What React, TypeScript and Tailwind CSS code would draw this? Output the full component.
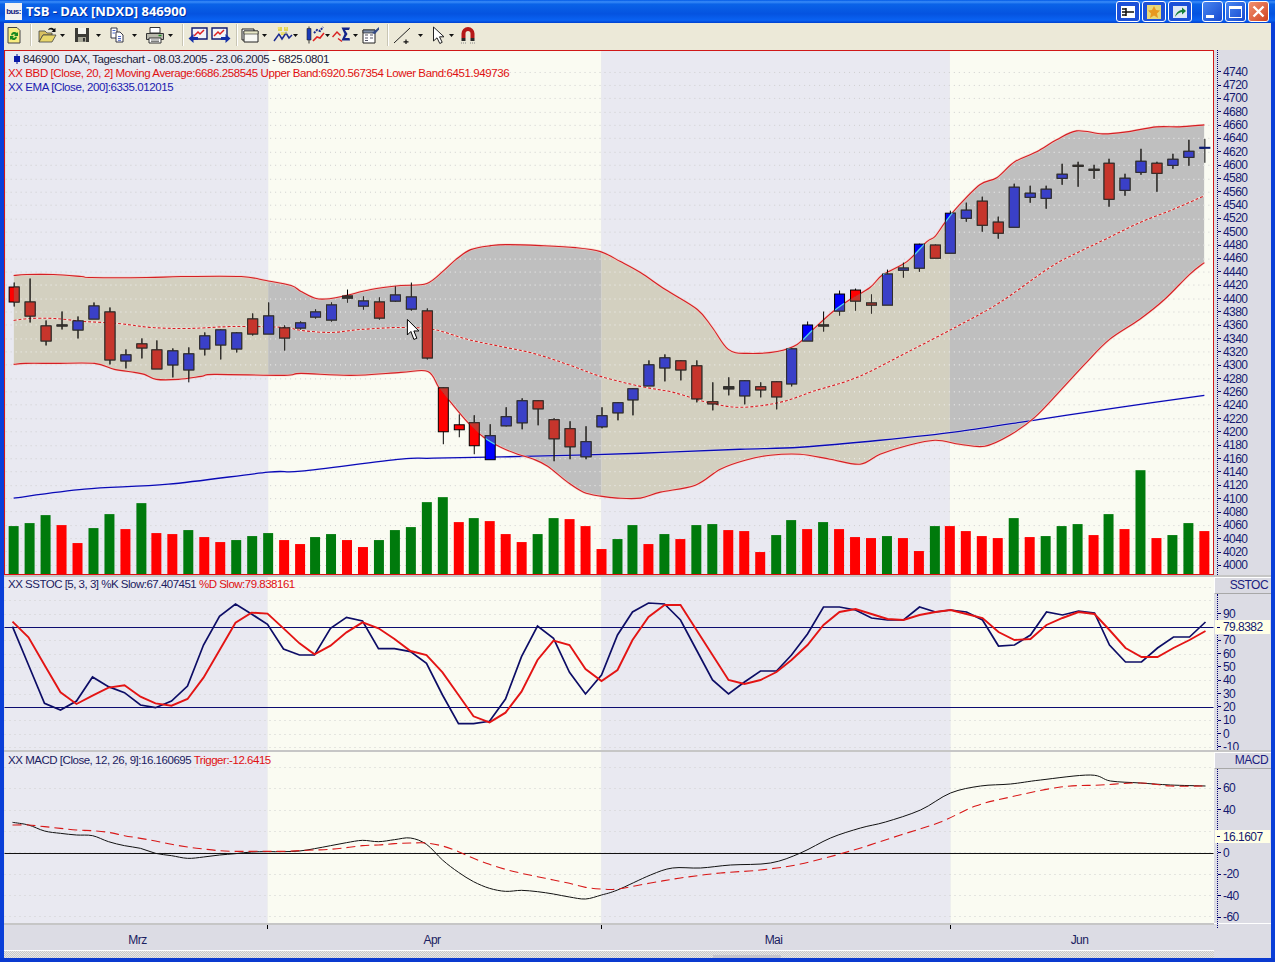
import React from "react";

const xAt = (i: number) => Math.round(12.3 + 15.9 * i);
type C = [number, number, number, number, "r" | "b" | "k"];
const candles: C[] = [
  [283,287,302,307,"r"],[279,302,316,323,"r"],[321,326,341,346,"r"],[312,325,326,330,"k"],[317,321,330,339,"b"],
  [303,306,319,319,"b"],[308,312,360,365,"r"],[350,355,361,369,"b"],[339,344,348,359,"r"],[341,350,369,369,"r"],
  [349,351,365,378,"b"],[348,354,370,383,"b"],[333,336,349,356,"b"],[330,330,345,360,"b"],[333,333,349,353,"b"],
  [314,319,334,336,"r"],[303,316,334,334,"b"],[326,328,338,351,"r"],[322,323,328,330,"b"],[310,312,317,319,"b"],
  [303,305,320,322,"b"],[290,296,298,303,"k"],[297,301,306,310,"b"],[298,302,318,320,"r"],[287,295,301,302,"b"],
  [283,297,309,311,"b"],[309,311,358,360,"r"],[388,388,432,445,"r"],[415,425,430,438,"r"],[416,423,446,455,"r"],
  [425,436,460,460,"b"],[408,417,426,427,"b"],[399,401,423,430,"b"],[401,401,409,426,"r"],[419,420,439,462,"r"],
  [422,429,447,460,"r"],[427,442,457,460,"b"],[408,416,427,429,"b"],[403,403,413,421,"b"],[389,389,400,416,"b"],
  [361,365,386,386,"b"],[355,358,368,382,"b"],[361,361,370,381,"r"],[361,366,399,403,"r"],[383,402,404,411,"r"],
  [378,387,389,396,"k"],[381,381,396,405,"b"],[383,387,390,398,"r"],[382,382,397,410,"r"],[349,349,384,387,"b"],
  [322,325,341,341,"b"],[312,325,326,332,"k"],[291,294,311,316,"b"],[289,290,301,311,"r"],[295,303,305,314,"r"],
  [270,274,305,305,"b"],[263,268,270,278,"b"],[244,244,268,272,"b"],[245,245,258,258,"r"],[211,213,253,253,"b"],
  [203,210,218,222,"b"],[197,201,225,232,"r"],[217,222,233,239,"r"],[184,187,227,227,"b"],[186,193,197,203,"b"],
  [186,189,198,209,"b"],[164,174,178,185,"b"],[162,165,166,187,"k"],[165,169,170,179,"k"],[159,163,199,207,"r"],
  [174,178,190,196,"b"],[149,161,172,175,"b"],[162,163,173,192,"r"],[154,159,165,169,"b"],[140,151,157,166,"b"],
  [139,147,148,163,"k"],
];
const volZ: [number, "g" | "r"][] = [
  [186,"g"],[177,"g"],[153,"g"],[183,"r"],[237,"r"],[192,"g"],[150,"g"],[195,"r"],[117,"g"],[207,"r"],[210,"r"],[198,"g"],[219,"r"],[234,"r"],[228,"g"],[216,"g"],[207,"g"],[228,"r"],[240,"r"],[219,"g"],
  [210,"g"],[228,"r"],[249,"r"],[228,"g"],[198,"g"],[189,"g"],[114,"g"],[99,"g"],[174,"r"],[162,"g"],[171,"r"],[210,"r"],[234,"r"],[210,"g"],[162,"g"],[165,"r"],[186,"r"],[255,"r"],[225,"g"],[183,"g"],
  [240,"r"],[210,"g"],[225,"r"],[183,"g"],[180,"g"],[198,"r"],[201,"r"],[264,"r"],[213,"g"],[168,"g"],[195,"r"],[174,"g"],[195,"r"],[219,"r"],[222,"r"],[216,"g"],[222,"r"],[261,"r"],[186,"g"],[186,"r"],
  [201,"r"],[216,"r"],[222,"r"],[162,"g"],[219,"r"],[216,"g"],[186,"g"],[180,"g"],[213,"r"],[150,"g"],[195,"r"],[18,"g"],[222,"r"],[213,"g"],[177,"g"],[201,"r"],
];
type P = [number, number][];
const upper: P = [[12,276],[25,275],[52,275],[80,277],[90,278],[145,278],[180,277],[240,277],[265,281],[290,286],[300,292],[315,299],[330,299],[345,296],[370,290],[400,286],[426,284],[444,270],[455,260],[470,250],[490,246],[505,245],[540,246],[575,248],[600,252],[620,262],[640,273],[665,290],[697,310],[712,328],[728,350],[747,354],[777,352],[797,345],[813,330],[833,312],[850,300],[870,288],[883,275],[907,262],[927,242],[935,237],[945,223],[957,208],[980,185],[997,178],[1015,162],[1037,152],[1057,140],[1077,131],[1103,134],[1127,132],[1157,127],[1180,127],[1205,125]];
const lower: P = [[12,365],[24,364],[53,364],[93,364],[113,370],[133,373],[143,375],[155,380],[177,380],[200,377],[213,375],[283,376],[300,374],[350,376],[400,373],[427,372],[438,388],[450,403],[467,423],[483,438],[500,448],[517,455],[533,460],[547,467],[567,483],[583,493],[600,497],[617,499],[640,499],[660,493],[695,486],[720,470],[745,461],[770,456],[800,455],[830,460],[860,465],[880,455],[905,447],[935,441],[960,445],[985,447],[1010,436],[1035,418],[1060,392],[1085,365],[1110,340],[1140,320],[1165,300],[1190,275],[1205,263]];
const mid: P = [[12,321],[28,319],[53,319],[83,322],[117,324],[150,328],[187,329],[233,327],[283,328],[300,331],[330,333],[360,330],[400,328],[433,330],[467,340],[500,347],[533,354],[567,365],[600,377],[640,387],[673,393],[707,403],[740,408],[780,403],[813,392],[857,378],[907,353],[957,327],[1000,303],[1050,268],[1080,252],[1107,239],[1140,223],[1173,210],[1205,196]];
const ema: P = [[12,499],[83,490],[167,485],[267,473],[300,472],[400,460],[433,459],[533,457],[640,454],[740,450],[800,448],[880,441],[960,432],[1040,420],[1120,408],[1205,396]];

const zk = [155,270,385,405,378,306,335,353,390,398,378,333,210,124,87,117,148,222,240,240,160,127,138,221,221,230,265,360,446,446,439,372,245,153,190,292,357,300,180];
const zd = [140,187,270,352,387,362,338,331,365,385,392,372,308,226,143,113,116,160,205,238,212,172,142,160,192,228,240,292,360,424,442,413,350,255,197,210,282,318,285];
const kRight = [612,603,604,620,650,680,694,682,671,671,655,634,607,607,610,618,620,620,607,612,610,612,620,646,645,635,612,615,611,613,645,662,662,648,637,637,622];
const dRight = [640,617,605,605,630,655,680,684,680,672,660,645,625,612,609,614,619,620,615,612,610,614,618,632,640,639,625,618,612,614,630,648,657,657,648,640,631];
const stK: P = [...zk.map((z, i) => [xAt(i), 575 + z / 3] as [number, number]), ...kRight.map((y, i) => [xAt(i + 39), y] as [number, number])];
const stD: P = [...zd.map((z, i) => [xAt(i), 575 + z / 3] as [number, number]), ...dRight.map((y, i) => [xAt(i + 39), y] as [number, number])];

const mB = [742,750,768,775,780,782,800,812,820,835,842,850,846,840,836,831,830,830,828,821,812,803,796,800,794,789,808,855,892,920,940,949,946,950,957,966,972,960,945];
const mT = [750,750,755,760,765,767,772,782,790,798,808,816,822,827,829,829,829,829,827,825,823,818,812,810,806,804,804,813,830,850,868,883,895,905,915,925,937,942,942];
const macdB: P = [...mB.map((z, i) => [xAt(i), 575 + z / 3] as [number, number]), [650,875],[672,868],[700,868],[730,865],[770,863],[800,853],[830,838],[860,828],[885,822],[920,810],[950,793],[980,786],[1010,784],[1040,780],[1090,775],[1110,781],[1140,783],[1170,785],[1205,786]];
const macdT: P = [...mT.map((z, i) => [xAt(i), 575 + z / 3] as [number, number]), [650,883],[680,878],[720,873],[760,870],[800,864],[850,851],[900,835],[940,822],[975,806],[1010,797],[1060,787],[1100,785],[1140,783],[1170,786],[1205,786]];

const pts = (p: P) => p.map(([x, y]) => `${x},${y}`).join(" ");
const curve = (p: P) => {
  let d = "";
  for (let i = 0; i < p.length - 1; i++) {
    const p0 = p[Math.max(i - 1, 0)], p1 = p[i], p2 = p[i + 1], p3 = p[Math.min(i + 2, p.length - 1)];
    const c1x = p1[0] + (p2[0] - p0[0]) / 6, c1y = p1[1] + (p2[1] - p0[1]) / 6;
    const c2x = p2[0] - (p3[0] - p1[0]) / 6, c2y = p2[1] - (p3[1] - p1[1]) / 6;
    d += ` C${c1x.toFixed(1)} ${c1y.toFixed(1)} ${c2x.toFixed(1)} ${c2y.toFixed(1)} ${p2[0]} ${p2[1]}`;
  }
  return d;
};
const smooth = (p: P) => `M${p[0][0]} ${p[0][1]}` + curve(p);
const lowerRev = [...lower].reverse() as P;
const bandPath = smooth(upper) + ` L${lowerRev[0][0]} ${lowerRev[0][1]}` + curve(lowerRev) + " Z";

const sections: [number, number, string, string][] = [
  [4, 263, "#e9e9f1", "#d3d0c0"],
  [267, 334, "#fafbf2", "#bfbfbf"],
  [601, 349, "#e9e9f1", "#d3d0c0"],
  [950, 264, "#fafbf2", "#bfbfbf"],
];
const Sections = ({ y, h }: { y: number; h: number }) => (
  <>
    {sections.map(([x, w, c]) => (
      <rect key={x} x={x} y={y} width={w} height={h} fill={c} />
    ))}
  </>
);
const DotRows = ({ from, to, step, color = "#cfcfcf" }: { from: number; to: number; step: number; color?: string }) => {
  const out: React.ReactElement[] = [];
  for (let y = from; y <= to; y += step) {
    const yy = Math.round(y) + 0.5;
    out.push(<line key={y} x1={4} x2={1213} y1={yy} y2={yy} stroke={color} strokeWidth={1} strokeDasharray="1 4" />);
  }
  return <>{out}</>;
};

const Candles = ({ inside }: { inside: boolean }) => (
  <>
    {candles.map(([hi, t, b, lo, c], i) => {
      const x = xAt(i);
      const fill = c === "r" ? (inside ? "#c6352c" : "#ff0000") : c === "b" ? (inside ? "#3a40c8" : "#0000ff") : "#333";
      const stroke = inside ? "#33302c" : "#000";
      return (
        <g key={i}>
          <line x1={x + 0.5} x2={x + 0.5} y1={hi} y2={lo} stroke={stroke} />
          {i === 75 ? (
            <rect x={x - 5} y={t} width={11} height={2} fill="#0a1a70" />
          ) : (
            <rect x={x - 4.5} y={t + 0.5} width={10} height={Math.max(b - t, 1)} fill={fill} stroke={stroke} />
          )}
        </g>
      );
    })}
  </>
);

const PriceChart = () => (
  <svg viewBox="4 51 1209 524" className="block w-full h-full">
    <defs>
      <clipPath id="band"><path d={bandPath} /></clipPath>
      <clipPath id="blueBodies">
        {candles.map(([, t, b, , c], i) => (c === "b" ? <rect key={i} x={xAt(i) - 4} y={t} width={9} height={b - t} /> : null))}
      </clipPath>
    </defs>
    <Sections y={51} h={524} />
    <DotRows from={71.7} to={567} step={13.352} />
    <g clipPath="url(#band)">
      {sections.map(([x, w, , c]) => (
        <rect key={x} x={x} y={51} width={w} height={524} fill={c} />
      ))}
      <DotRows from={71.7} to={567} step={13.352} color="#f2f2f2" />
    </g>
    <path d={smooth(ema)} fill="none" stroke="#e8e8ff" strokeWidth={2.2} opacity={0.6} />
    <path d={smooth(ema)} fill="none" stroke="#0a0ab4" strokeWidth={1.3} />
    <path d={smooth(upper)} fill="none" stroke="#f6c9c0" strokeWidth={2.4} opacity={0.7} />
    <path d={smooth(lower)} fill="none" stroke="#f6c9c0" strokeWidth={2.4} opacity={0.7} />
    <path d={smooth(upper)} fill="none" stroke="#d51f24" strokeWidth={1.1} />
    <path d={smooth(lower)} fill="none" stroke="#d51f24" strokeWidth={1.1} />
    <path d={smooth(mid)} fill="none" stroke="#f5e6df" strokeWidth={1.4} />
    <path d={smooth(mid)} fill="none" stroke="#d51f24" strokeWidth={1.1} strokeDasharray="3 2" />
    <Candles inside={false} />
    <g clipPath="url(#band)"><Candles inside={true} /></g>
    <g clipPath="url(#blueBodies)">
      <path d={smooth(upper)} fill="none" stroke="#52d5e8" strokeWidth={1.2} />
      <path d={smooth(lower)} fill="none" stroke="#52d5e8" strokeWidth={1.2} />
    </g>
    {volZ.map(([z, c], i) => {
      const top = Math.round(465 + z / 3);
      return <rect key={i} x={xAt(i) - 5} y={top} width={10} height={575 - top} fill={c === "g" ? "#007a0c" : "#ff0000"} />;
    })}
    <path d="M406.5 320 V335.5 L410 332 L413 340 L416 338.8 L413 331.5 L418 331.5 Z" fill="#fff" stroke="#000" strokeWidth={1} />
  </svg>
);

const StochChart = () => (
  <svg viewBox="4 577 1209 173" className="block w-full h-full">
    <Sections y={577} h={173} />
    <DotRows from={587} to={750} step={13.33} />
    <line x1={4} x2={1213} y1={627.5} y2={627.5} stroke="#0c0c70" />
    <line x1={4} x2={1213} y1={707.5} y2={707.5} stroke="#0c0c70" />
    <polyline points={pts(stK)} fill="none" stroke="#0d0d66" strokeWidth={1.7} />
    <polyline points={pts(stD)} fill="none" stroke="#e31414" strokeWidth={1.9} />
  </svg>
);

const MacdChart = () => (
  <svg viewBox="4 752 1209 171" className="block w-full h-full">
    <Sections y={752} h={171} />
    <DotRows from={767} to={923} step={21.35} />
    <line x1={4} x2={1213} y1={853.5} y2={853.5} stroke="#111" strokeWidth={1.1} />
    <path d={smooth(macdB)} fill="none" stroke="#111" strokeWidth={1} />
    <path d={smooth(macdT)} fill="none" stroke="#d81818" strokeWidth={1.1} strokeDasharray="9 5" />
  </svg>
);

const AxisRow = ({ label, h }: { label: string; h: string }) => (
  <div className={`flex items-center ${h}`}>
    <span className="w-[3px] h-px bg-[#000070] mr-[2px] shrink-0" />
    <span>{label}</span>
  </div>
);

const Caret = ({ className = "" }: { className?: string }) => (
  <svg viewBox="0 0 5 3" className={`w-[5px] h-[3px] shrink-0 ${className}`}><path d="M0 0H5L2.5 3Z" fill="#111" /></svg>
);
const Sep = ({ className = "" }: { className?: string }) => (
  <div className={`w-[2px] h-[22px] shrink-0 border-l border-[#c8c5b4] border-r border-r-white ${className}`} />
);
const Ic = ({ className = "", children }: { className?: string; children: React.ReactNode }) => (
  <svg viewBox="0 0 20 20" className={`w-[20px] h-[20px] shrink-0 ${className}`}>{children}</svg>
);

const Toolbar = () => (
  <div className="flex items-center h-[27px] mx-[4px] pb-[3px] bg-[#ece9d8] shrink-0">
    <Ic>
      <path d="M4 2.5H13L16 5.5V18H4Z" fill="#f8ec80" stroke="#444" />
      <path d="M7 10a3.5 3.5 0 0 1 6-2l1-1v4h-4l1.300-1.200a2 2 0 0 0-3 .8Z" fill="#1a8a20" />
      <path d="M13 12a3.500 3.500 0 0 1-6 2l-1 1v-4h4l-1.300 1.200a2 2 0 0 0 3-.8Z" fill="#1a8a20" />
    </Ic>
    <Sep className="ml-[6px]" />
    <Ic className="ml-[5px]">
      <path d="M2 17V6H8L10 8H15V10H6L2 17Z" fill="#d8c060" stroke="#444" strokeWidth=".8" />
      <path d="M2 17L6 10H19L15 17Z" fill="#e8d66a" stroke="#444" strokeWidth=".8" />
      <path d="M11 5C12 2.500 15 2 17 4L18.500 3V7H14.500L16 5.500C15 4.500 13 4 11 5Z" fill="#111" />
    </Ic>
    <Caret className="ml-[3px]" />
    <Ic className="ml-[7px]">
      <path d="M3 3H17V17H3Z" fill="#3b3b36" />
      <path d="M6 3H14V9H6Z" fill="#f4f4ee" />
      <path d="M6 12H14V17H6Z" fill="#a8a898" />
      <path d="M11 13H13V16.500H11Z" fill="#333" />
    </Ic>
    <Caret className="ml-[4px]" />
    <Ic className="ml-[6px]">
      <path d="M4 3H10V13H4Z" fill="#fff" stroke="#223" strokeWidth=".9" />
      <path d="M9 7H13L16 10V17H9Z" fill="#fff" stroke="#223" strokeWidth=".9" />
      <path d="M5.500 5.500H8.500M5.500 8H8M11 11.500H14M11 13.500H14M11 15.300H14" stroke="#3855c0" strokeWidth=".9" />
    </Ic>
    <Caret className="ml-[5px]" />
    <Ic className="ml-[8px]">
      <path d="M5 2.500H15V8H5Z" fill="#fff" stroke="#333" />
      <path d="M1.500 8.500H18.500V14.500H1.500Z" fill="#b8b8ac" stroke="#333" />
      <path d="M4 13H16V18H4Z" fill="#fff" stroke="#333" />
      <path d="M6 15H14M6 16.500H14" stroke="#444" strokeWidth=".7" />
      <path d="M13.500 10.500H16.500" stroke="#1a8a20" strokeWidth="1.400" />
    </Ic>
    <Caret className="ml-[3px]" />
    <Sep className="ml-[9px]" />
    <Ic className="ml-[4px]">
      <path d="M4 3H19V14H4Z" fill="#f4f4f8" stroke="#111a70" strokeWidth="1.400" />
      <path d="M6 11L10 7L12 9L16 5" fill="none" stroke="#e02020" strokeWidth="1.500" />
      <path d="M0.500 13.500L5.500 9V12H10V15H5.500V18Z" fill="#1530a8" />
    </Ic>
    <Ic className="ml-[3px]">
      <path d="M1 3H16V14H1Z" fill="#f4f4f8" stroke="#111a70" strokeWidth="1.400" />
      <path d="M3 11L7 7L9 9L13 5" fill="none" stroke="#e02020" strokeWidth="1.500" />
      <path d="M19.500 13.500L14.500 9V12H10V15H14.500V18Z" fill="#1530a8" />
    </Ic>
    <Sep className="ml-[5px]" />
    <Ic className="ml-[2px]">
      <path d="M2 4H14V15H2Z" fill="#f2f2f2" stroke="#222" />
      <path d="M4 6H18V17H4Z" fill="#f8f8f4" stroke="#222" />
      <path d="M4 6H18V9H4Z" fill="#e8e8c8" stroke="#222" strokeWidth=".6" />
    </Ic>
    <Caret className="ml-[2px]" />
    <Ic className="ml-[6px]">
      <path d="M5 2H9V6H5ZM11 2H15V6H11ZM8 7H12V10H8Z" fill="#e0d040" opacity=".85" />
      <path d="M1 16L6 9L9 14L13 8L16 13L19 10" fill="none" stroke="#1a2a90" strokeWidth="1.500" />
      <path d="M4 3H7M12 3H14M6 8H14" stroke="#f4ec90" strokeWidth="1" />
    </Ic>
    <Caret />
    <Ic className="ml-[7px]">
      <path d="M4 1.500V18.500" stroke="#333" />
      <path d="M2 3.500H6V15H2Z" fill="#1a3ab8" stroke="#222" strokeWidth=".6" />
      <path d="M8 16L12 12L15 13L19 8" fill="none" stroke="#e02020" strokeWidth="1.600" />
      <path d="M9 8L12 5L15 6L18 2" fill="none" stroke="#1a2a90" strokeWidth="2" strokeDasharray="2 1" />
    </Ic>
    <Caret />
    <Ic className="ml-[2px]">
      <path d="M0.500 12L5 7L8.500 10.500" fill="none" stroke="#d82020" strokeWidth="1.500" />
      <path d="M9.500 2.500H18L17 5L13 5L15.500 9L13 13H17.500L18 15.500H9.500L12.500 9Z" fill="#15248a" />
      <path d="M6 13.500L10 16.500" stroke="#d82020" strokeWidth="1.300" />
    </Ic>
    <Caret className="ml-[1px]" />
    <Ic className="ml-[3px]">
      <path d="M2 5H14V18H2Z" fill="#fff" stroke="#222" />
      <path d="M2 5H14V8H2Z" fill="#7f8fa8" stroke="#222" strokeWidth=".7" />
      <path d="M4 10H7M4 13H7M4 15.500H7M9 10H12M9 13H12" stroke="#556" strokeWidth="1" />
      <path d="M11 8L18 2V4.500L14 9Z" fill="#334a88" />
    </Ic>
    <Sep className="ml-[6px]" />
    <Ic className="ml-[4px]">
      <path d="M1 18L17 3" stroke="#222" strokeWidth="1" />
      <path d="M13 14.500V19M10.500 16.800H15.500" stroke="#111" strokeWidth="1.200" />
    </Ic>
    <Caret className="ml-[5px]" />
    <Ic className="ml-[6px]">
      <path d="M4.500 2V16L8 12.800L10.800 18.500L13.200 17.300L10.500 11.800H15Z" fill="#fff" stroke="#222" strokeWidth="1" />
    </Ic>
    <Caret />
    <Ic className="ml-[4px]">
      <path d="M3.500 13V8.500a6.500 6.500 0 0 1 13 0V13H12.500V8.500a2.500 2.500 0 0 0-5 0V13Z" fill="#b51818" />
      <path d="M3.500 13H7.500V16H3.500ZM12.500 13H16.500V16H12.500Z" fill="#2a2a2a" />
      <path d="M3 18H8M12 18H17" stroke="#888" strokeDasharray="1 1" />
    </Ic>
  </div>
);

const xpBtn = "h-[21px] rounded-[3px] border border-white flex items-center justify-center shrink-0";
const TitleBar = () => (
  <div className="flex items-center h-[23px] shrink-0 bg-[linear-gradient(180deg,#0058e6_0%,#3a8cf8_8%,#0a63e8_18%,#0553e0_60%,#0a62f2_88%,#0040d0_100%)]">
    <div className="ml-[5px] w-[17px] h-[17px] bg-[#f2f2f2] text-[#102080] text-[8px] font-bold leading-[17px] text-center font-['Liberation_Sans',sans-serif] shrink-0">bus:</div>
    <div className="ml-[4px] text-white text-[13px] font-bold font-['Open_Sans',sans-serif] [text-shadow:1px_1px_0_#0030a0] whitespace-nowrap tracking-[0px]">TSB - DAX [NDXD] 846900</div>
    <div className="flex-1" />
    <div className={`${xpBtn} w-[24px] mr-[2px] bg-[#1c50d8]`}>
      <svg viewBox="0 0 14 12" className="w-[14px] h-[12px]"><rect width="14" height="12" fill="#fff" /><path d="M1 6H13M5 2V10M1 3H5M1 9H5" stroke="#111" strokeWidth="1.500" /></svg>
    </div>
    <div className={`${xpBtn} w-[24px] mr-[2px] bg-[#1c50d8]`}>
      <svg viewBox="0 0 14 14" className="w-[14px] h-[14px]"><rect width="14" height="14" fill="#e8d878" /><path d="M7 1L9 5L13 5.500L10 8.500L11 13L7 10.500L3 13L4 8.500L1 5.500L5 5Z" fill="#e89820" /></svg>
    </div>
    <div className={`${xpBtn} w-[24px] mr-[10px] bg-[#1c50d8]`}>
      <svg viewBox="0 0 14 12" className="w-[14px] h-[12px]"><rect width="14" height="12" fill="#dfe8f6" /><path d="M2 11C3 7 5 4.500 9 4V1.500L13 5L9 8.500V6C6.500 6.500 4 8 2 11Z" fill="#18803a" /></svg>
    </div>
    <div className={`${xpBtn} w-[21px] mr-[2px] bg-linear-to-br from-[#4a86f0] to-[#1848d0]`}>
      <div className="w-[8px] h-[3px] bg-white mt-[9px] mr-[5px]" />
    </div>
    <div className={`${xpBtn} w-[21px] mr-[2px] bg-linear-to-br from-[#4a86f0] to-[#1848d0]`}>
      <div className="w-[13px] h-[12px] border border-white border-t-[3px]" />
    </div>
    <div className={`${xpBtn} w-[21px] mr-[6px] bg-linear-to-br from-[#f09070] to-[#d0401c]`}>
      <svg viewBox="0 0 13 13" className="w-[13px] h-[13px]"><path d="M1.500 1.500L11.500 11.500M11.500 1.500L1.500 11.500" stroke="#fff" strokeWidth="2.400" /></svg>
    </div>
  </div>
);

const legendFont = "font-['Liberation_Sans',sans-serif]";
const priceLabels = Array.from({ length: 38 }, (_, i) => String(4740 - 20 * i));
const stochLabels = ["90", "", "70", "60", "50", "40", "30", "20", "10", "0", "-10"];
const macdLabels = ["60", "40", "", "0", "-20", "-40", "-60"];
const sepClass = "h-[2px] shrink-0 bg-[#c6c6c6]";
const axisHead = "h-[17px] shrink-0 bg-[#dadae2] border-t border-l border-white border-b border-b-[#a8a8a8] text-right pr-[3px] leading-[15px] text-[12px] text-[#1a2080]";

export default function App() {
  return (
    <div className={`w-[1275px] h-[962px] flex flex-col overflow-hidden bg-[#0a3fd8] ${legendFont} text-[12px] tracking-[-0.55px] text-[#141a70]`}>
      <TitleBar />
      <Toolbar />
      <div className="flex-1 min-h-0 flex flex-col ml-[4px] mr-[4px] bg-[#dcdce4]">
        <div className="flex h-[525px] shrink-0">
          <div className="relative w-[1210px] shrink-0 border border-[#d01818] border-b-[#e01010]">
            <PriceChart />
            <div className="absolute left-[3px] top-[1px] flex flex-col leading-[14px] text-[11.5px] whitespace-nowrap">
              <div className="flex items-center text-[#22223a] tracking-[-0.41px]">
                <svg viewBox="0 0 8 10" className="w-[8px] h-[10px] ml-[5px] mr-[2px]"><path d="M4 0V10" stroke="#001090" /><rect x="1" y="2" width="6" height="6" fill="#0a1aa8" /></svg>
                <span>846900&nbsp; DAX, Tageschart - 08.03.2005 - 23.06.2005 - 6825.0801</span>
              </div>
              <div className="text-[#e01010] tracking-[-0.4px]">XX BBD [Close, 20, 2] Moving Average:6686.258545 Upper Band:6920.567354 Lower Band:6451.949736</div>
              <div className="text-[#1a1ab0] tracking-[-0.4px]">XX EMA [Close, 200]:6335.012015</div>
            </div>
          </div>
          <div className="flex-1 overflow-hidden">
            <div className="ml-[3px] border-l border-dotted border-[#000070] h-[525px] pt-[15px]">
              {priceLabels.map((l) => <AxisRow key={l} label={l} h="h-[13.35px]" />)}
            </div>
          </div>
        </div>
        <div className={sepClass} />
        <div className="flex h-[173px] shrink-0">
          <div className="relative w-[1210px] shrink-0">
            <StochChart />
            <div className="absolute left-[4px] top-0 leading-[15px] text-[11.5px] tracking-[-0.5px] whitespace-nowrap text-[#1a2060]">
              XX SSTOC [5, 3, 3] %K Slow:67.407451 <span className="text-[#e01010]">%D Slow:79.838161</span>
            </div>
          </div>
          <div className="relative flex-1 flex flex-col overflow-hidden">
            <div className={axisHead}>SSTOC</div>
            <div className="ml-[3px] flex-1 border-l border-dotted border-[#000070] pt-[13px] overflow-hidden">
              {stochLabels.map((l, i) => <AxisRow key={i} label={l} h="h-[13.34px]" />)}
            </div>
            <div className="absolute left-[1px] top-[43px] w-[55px] h-[14px] bg-[#ffffe6] flex items-center pl-[2px] leading-none">
              <span className="w-[3px] h-px bg-[#000070] mr-[3px]" />79.8382
            </div>
          </div>
        </div>
        <div className={sepClass} />
        <div className="flex h-[171px] shrink-0">
          <div className="relative w-[1210px] shrink-0">
            <MacdChart />
            <div className="absolute left-[4px] top-[1px] leading-[15px] text-[11.5px] tracking-[-0.47px] whitespace-nowrap text-[#1a2060]">
              XX MACD [Close, 12, 26, 9]:16.160695 <span className="text-[#e01010]">Trigger:-12.6415</span>
            </div>
          </div>
          <div className="relative flex-1 flex flex-col">
            <div className={axisHead}>MACD</div>
            <div className="ml-[3px] flex-1 border-l border-dotted border-[#000070] pt-[9px]">
              {macdLabels.map((l, i) => <AxisRow key={i} label={l} h="h-[20.8px] mb-[0.7px]" />)}
            </div>
            <div className="absolute left-[1px] top-[78px] w-[55px] h-[13px] bg-[#ffffe6] flex items-center pl-[2px] leading-none">
              <span className="w-[3px] h-px bg-[#000070] mr-[3px]" />16.1607
            </div>
          </div>
        </div>
        <div className="flex flex-1 min-h-0">
          <div className="w-[1210px] shrink-0 flex flex-col border-t-2 border-[#c6c6c6]">
            <div className="flex h-[25px] shrink-0 text-[#1a2060] text-center leading-[30px]">
              <div className="w-[263px] pl-[4px]">Mrz</div>
              <div className="relative w-[334px] pr-[4px]"><span className="absolute left-0 top-0 w-px h-[4px] bg-black" />Apr</div>
              <div className="relative w-[349px] pr-[4px]"><span className="absolute left-0 top-0 w-px h-[4px] bg-black" />Mai</div>
              <div className="relative flex-1 pr-[5px]"><span className="absolute left-0 top-0 w-px h-[4px] bg-black" />Jun</div>
            </div>
            <div className="flex-1 border-t border-white bg-[repeating-conic-gradient(#e6e6e6_0_25%,#cacaca_0_50%)] bg-size-[2px_2px] relative">
              <div className="absolute left-[709px] bottom-0 w-[68px] h-[3px] bg-[#c4c4cc]" />
            </div>
          </div>
          <div className="flex-1 border-t border-white" />
        </div>
      </div>
      <div className="h-[4px] shrink-0 bg-[#0a3ad0]" />
    </div>
  );
}
